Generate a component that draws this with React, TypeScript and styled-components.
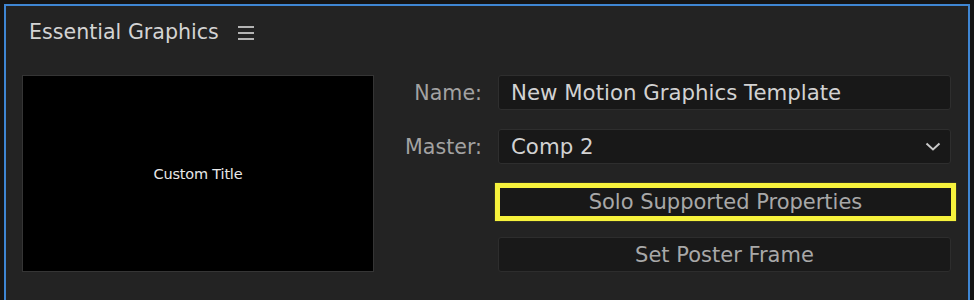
import React from "react";
import styled, { createGlobalStyle } from "styled-components";

const Global = createGlobalStyle`
  html, body { margin: 0; padding: 0; background: #151515; }
  body { font-family: "DejaVu Sans", "Open Sans", sans-serif; }
`;

const Page = styled.div`
  padding: 4px 0 0 4px;
  height: 296px;
  overflow: hidden;
`;

const Panel = styled.section`
  width: 962px;
  height: 320px;
  background: #232323;
  border: 2px solid #3f86d3;
  border-bottom: none;
  box-sizing: content-box;
  display: flex;
  flex-direction: column;
`;

const Header = styled.header`
  height: 52px;
  display: flex;
  align-items: center;
  gap: 19px;
  padding: 0 0 1px 23px;
`;

const Title = styled.h1`
  margin: 0;
  font-size: 20.6px;
  font-weight: 400;
  color: #d4d4d4;
`;

const Hamburger = styled.svg`
  width: 16px;
  height: 14px;
  margin-top: 1px;
`;

const Body = styled.div`
  display: flex;
  padding: 16px 0 0 16px;
  gap: 16px;
`;

const Preview = styled.div`
  width: 350px;
  height: 195px;
  background: #000;
  border: 1px solid #353535;
  display: flex;
  align-items: center;
  justify-content: center;
`;

const PreviewText = styled.span`
  font-family: "DejaVu Sans", sans-serif;
  font-size: 14.5px;
  color: #e8e8e8;
  letter-spacing: -0.2px;
`;

const Form = styled.div`
  display: grid;
  grid-template-columns: 92px 453px;
  column-gap: 16px;
  row-gap: 19px;
  grid-auto-rows: 35px;
`;

const Label = styled.label`
  font-size: 20.6px;
  color: #a2a2a2;
  text-align: right;
  align-self: center;
  white-space: nowrap;
`;

const Field = styled.div`
  background: #181818;
  border: 1px solid #2e2e2e;
  border-radius: 3px;
  display: flex;
  align-items: center;
  padding: 0 9px 0 12px;
  color: #d2d2d2;
  font-size: 21.3px;
  justify-content: space-between;
  white-space: nowrap;
`;

const Button = styled.button<{ $highlight?: boolean }>`
  grid-column: 2;
  font-family: inherit;
  font-size: 21px;
  color: #a8a8a8;
  background: #191919;
  border: 1px solid #2d2d2d;
  border-radius: 3px;
  padding: 0;
  ${(p) =>
    p.$highlight &&
    `
    border: 5px solid #f6f23c;
    border-radius: 0;
    margin: 0 -5px -3px -3px;
    background: #181818;
    box-shadow: 0 0 1px #8a871e;
  `}
`;

export default function App() {
  return (
    <>
      <Global />
      <Page>
        <Panel>
          <Header>
            <Title>Essential Graphics</Title>
            <Hamburger viewBox="0 0 16 14">
              <rect x="0" y="0" width="16" height="2" fill="#b4b4b4" />
              <rect x="0" y="6" width="16" height="2" fill="#b4b4b4" />
              <rect x="0" y="12" width="16" height="2" fill="#b4b4b4" />
            </Hamburger>
          </Header>
          <Body>
            <Preview>
              <PreviewText>Custom Title</PreviewText>
            </Preview>
            <Form>
              <Label>Name:</Label>
              <Field>New Motion Graphics Template</Field>
              <Label>Master:</Label>
              <Field>
                <span>Comp 2</span>
                <svg width="16" height="9" viewBox="0 0 16 9">
                  <path d="M1.5 1.5 L8 7.5 L14.5 1.5" fill="none" stroke="#c8c8c8" strokeWidth="2" />
                </svg>
              </Field>
              <Button $highlight>Solo Supported Properties</Button>
              <Button>Set Poster Frame</Button>
            </Form>
          </Body>
        </Panel>
      </Page>
    </>
  );
}
